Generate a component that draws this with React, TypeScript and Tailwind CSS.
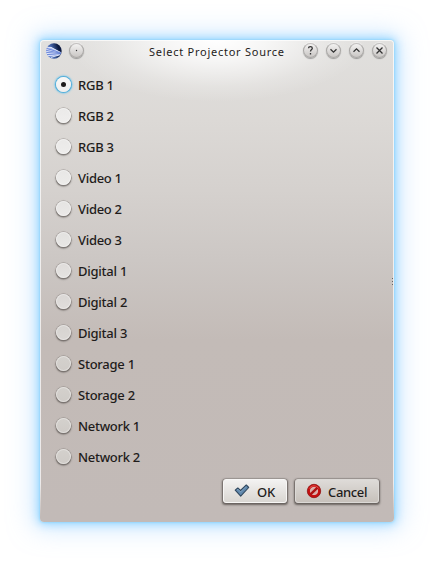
import React, { useState } from "react";

const sources = [
  { name: "RGB 1", fill: "from-[#f8f8f7] to-[#f0efee]", track: "tracking-[-0.25px]" },
  { name: "RGB 2", fill: "from-[#ebeae9] to-[#efeeed]", track: "tracking-[-0.25px]" },
  { name: "RGB 3", fill: "from-[#eae9e8] to-[#eeedec]", track: "tracking-[-0.25px]" },
  { name: "Video 1", fill: "from-[#e8e7e6] to-[#edecea]", track: "tracking-[-0.3px]" },
  { name: "Video 2", fill: "from-[#e5e4e2] to-[#ebe9e8]", track: "tracking-[-0.3px]" },
  { name: "Video 3", fill: "from-[#e2e1df] to-[#e8e7e5]", track: "tracking-[-0.3px]" },
  { name: "Digital 1", fill: "from-[#dfdcda] to-[#e5e3e1]", track: "tracking-[-0.25px]" },
  { name: "Digital 2", fill: "from-[#dad7d5] to-[#e0dddb]", track: "tracking-[-0.25px]" },
  { name: "Digital 3", fill: "from-[#d6d3d0] to-[#dbd8d5]", track: "tracking-[-0.25px]" },
  { name: "Storage 1", fill: "from-[#d4d1cd] to-[#d0ccc8]", track: "tracking-[-0.25px]" },
  { name: "Storage 2", fill: "from-[#d4d1cd] to-[#cfcbc7]", track: "tracking-[-0.25px]" },
  { name: "Network 1", fill: "from-[#d4d1cd] to-[#cfcbc7]", track: "tracking-[-0.3px]" },
  { name: "Network 2", fill: "from-[#d4d1cd] to-[#cfcbc7]", track: "tracking-[-0.3px]" },
];

function TitleButton({ children }: { children: React.ReactNode }) {
  return (
    <button className="grid size-[15px] shrink-0 place-items-center rounded-full border border-[#a9a7a5] border-t-[#c3c1c0] bg-linear-to-b from-[#f3f2f1] to-[#c9c6c4] shadow-[0_1px_1px_rgba(0,0,0,0.32),0_-1px_1px_rgba(255,255,255,0.4)]">
      <svg className="size-[13px] shrink-0" viewBox="0 0 13 13" fill="none" stroke="#333" strokeWidth="1.3">
        {children}
      </svg>
    </button>
  );
}

function AppLogo() {
  return (
    <svg className="size-4 shrink-0" viewBox="0 0 16 16">
      <defs>
        <linearGradient id="globe" x1="0" y1="0.6" x2="1" y2="0.3">
          <stop offset="0" stopColor="#6c8de0" />
          <stop offset="0.45" stopColor="#3c5a9c" />
          <stop offset="0.8" stopColor="#0b1940" />
        </linearGradient>
        <clipPath id="disc"><circle cx="8" cy="8" r="7.7" /></clipPath>
      </defs>
      <g clipPath="url(#disc)">
        <rect width="16" height="16" fill="url(#globe)" />
        <path d="M0 5 L5 4.3 L15.4 9.8 L13 12.2 L4 13.6 L0 11Z" fill="#a9baf0" />
        <path d="M0 4.4L5 4.4L15.3 9.8M0 6.3L15 10M0 8.4L15 10.3M0 10.5L15 10.7M1 12.5L14.6 11.1M5 14.4L14 11.7" stroke="#f2f5ff" strokeWidth="0.9" fill="none" />
        <path d="M0 5.3L15 9.8M0 7.4L15 10.2M0 9.5L15 10.5M1 11.6L14.5 10.9" stroke="#3d5fc8" strokeWidth="0.6" fill="none" />
      </g>
    </svg>
  );
}

export default function App() {
  const [selected, setSelected] = useState(0);
  return (
    <main className="h-[562px] w-[434px] overflow-hidden bg-white px-10 pt-10 font-['Noto_Sans',sans-serif] text-[#1f1c1b]">
      <section className="relative flex h-[482px] w-[354px] flex-col rounded-[4px] bg-[radial-gradient(ellipse_150px_62px_at_177px_0px,#fff_0%,rgba(255,255,255,0.72)_33%,rgba(255,255,255,0.2)_75%,transparent_100%),linear-gradient(to_bottom,#e1e0de_0px,#dcd9d6_80px,#d5d1ce_150px,#ccc7c4_220px,#c3bbb7_300px,#c2bab7_482px)] shadow-[0_0_3px_0px_#80d0fa,0_0_10px_2px_rgba(125,207,255,0.75),0_0_24px_7px_rgba(165,211,255,0.5)]">
        <div className="pointer-events-none absolute inset-0 rounded-[4px] border-x border-t border-white/70 [mask-image:linear-gradient(to_bottom,black_0%,black_92%,transparent_99%)]" />
        <header className="flex h-[26px] shrink-0 items-center pl-[6px] pr-[7px] pb-[5px]">
          <AppLogo />
          <div className="ml-[7px] flex"><TitleButton><circle cx="6.5" cy="6.5" r="0.7" fill="#333" stroke="none" /></TitleButton></div>
          <h1 className="ml-[65px] w-[137px] whitespace-nowrap pt-[3px] text-[11px] leading-[18px] tracking-[0.74px]">Select Projector Source</h1>
          <div className="ml-auto flex gap-2">
            <TitleButton><path d="M4.5 4.2C4.5 2.2 8.3 2.2 8.3 4.2C8.3 5.6 6.5 5.5 6.5 7.6M6.5 9V10.4" /></TitleButton>
            <TitleButton><path d="M3.5 5.2L6.5 8.1L9.5 5.2" /></TitleButton>
            <TitleButton><path d="M3.5 7.8L6.5 4.9L9.5 7.8" /></TitleButton>
            <TitleButton><path d="M3.5 3.5L9.5 9.5M9.5 3.5L3.5 9.5" /></TitleButton>
          </div>
        </header>
        <div className="flex flex-col pl-4 pt-[3px]" role="radiogroup">
          {sources.map((source, i) => (
            <button key={source.name} role="radio" aria-checked={selected === i} onClick={() => setSelected(i)} className="flex h-[31px] items-center gap-[7px] text-left">
              <span className={`grid size-[15px] shrink-0 place-items-center rounded-full bg-linear-to-b ${source.fill} ${selected === i ? "shadow-[0_0_0_1px_#58afd9,0_0_2px_1.5px_#70c4ea]" : "shadow-[0_0_0_0.5px_rgba(125,120,116,0.55),0_1px_1.5px_0.5px_rgba(60,55,52,0.6),inset_0_0_0_1px_rgba(255,255,255,0.35)]"}`}>
                {selected === i && <span className="size-[5px] rounded-full bg-[#1f1c1b]" />}
              </span>
              <span className={`whitespace-nowrap text-[13px] font-medium leading-[18px] ${source.track}`}>{source.name}</span>
            </button>
          ))}
        </div>
        <footer className="mt-[7px] flex justify-end gap-2 pr-[15px]">
          <button className="flex h-[24px] w-[64px] items-center rounded-[3px] border border-[#f7f6f5] bg-linear-to-b from-[#f3f2f1] to-[#d9d6d2] pl-[10px] shadow-[0_0_0_0.5px_rgba(90,85,82,0.35),0_1px_2px_0.5px_rgba(50,45,42,0.6)]">
            <svg className="size-4 shrink-0" viewBox="0 0 16 16"><path d="M1.2 7.2L3.8 5L6.5 7.5L12.3 2L14.7 4.5L6.7 13.1Z" fill="#6088ad" stroke="#30485f" strokeWidth="1.1" strokeLinejoin="round" /><path d="M3 7L4 6.2L6.6 8.9L12.3 3.4" fill="none" stroke="#8cadc8" strokeWidth="0.7" /></svg>
            <span className="ml-[7px] pt-[2px] text-[13px] font-medium leading-[18px] tracking-[-0.3px]">OK</span>
          </button>
          <button className="flex h-[24px] w-[84px] items-center rounded-[3px] border border-[#dcd9d6] bg-linear-to-b from-[#dedbd8] to-[#c7c1bb] pl-[10px] shadow-[0_0_0_0.5px_rgba(90,85,82,0.4),0_1px_2px_0.5px_rgba(50,45,42,0.6)]">
            <svg className="size-4 shrink-0" viewBox="0 0 16 16"><circle cx="8" cy="8" r="6.7" fill="#c40f0f" stroke="#8f1010" strokeWidth="0.8" /><circle cx="8" cy="8" r="3.7" fill="#d9aaa5" stroke="#e2c3bf" strokeWidth="0.8" /><path d="M4.5 11.3L11.5 4.7" stroke="#ad1111" strokeWidth="2.4" /><path d="M3.2 5.6A5.6 5.6 0 0 1 12.8 5.6" fill="none" stroke="#ee6b65" strokeWidth="0.7" /></svg>
            <span className="ml-[6px] pt-[2px] text-[13px] font-medium leading-[18px] tracking-[-0.35px]">Cancel</span>
          </button>
        </footer>
        <div className="pointer-events-none absolute right-[1px] top-[238px] flex flex-col gap-[2px]">
          <i className="size-px bg-[#666]" /><i className="size-px bg-[#666]" /><i className="size-px bg-[#666]" />
        </div>
      </section>
    </main>
  );
}
